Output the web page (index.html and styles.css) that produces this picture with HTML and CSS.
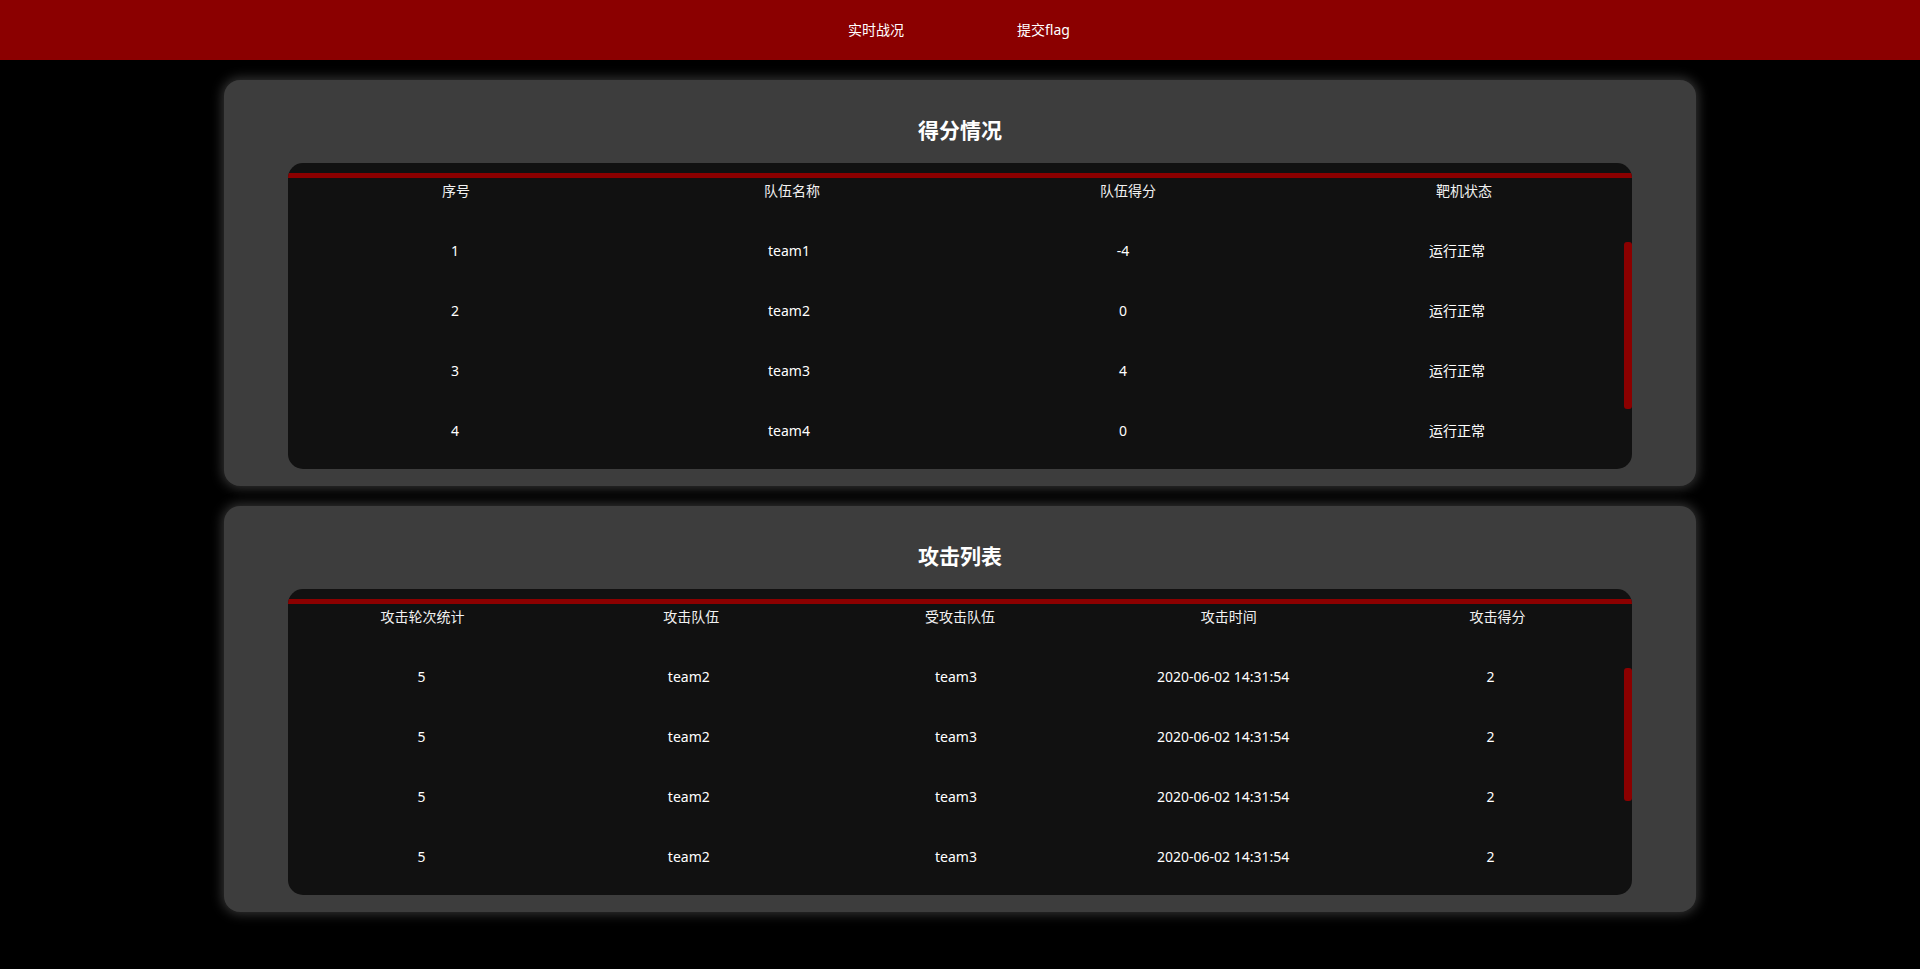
FILE: index.html
```html
<!DOCTYPE html>
<html lang="zh-CN">
<head>
<meta charset="utf-8">
<title>实时战况</title>
<link rel="stylesheet" href="styles.css">
</head>
<body>
<header class="topbar">
  <nav class="nav">
    <a class="nav-link" href="#">实时战况</a>
    <a class="nav-link" href="#">提交flag</a>
  </nav>
</header>
<main class="main">
  <section class="card">
    <h2 class="card-title">得分情况</h2>
    <div class="tbl">
      <div class="thead cols-4">
        <span>序号</span><span>队伍名称</span><span>队伍得分</span><span>靶机状态</span>
      </div>
      <div class="tbody">
        <div class="row cols-4"><span>1</span><span>team1</span><span>-4</span><span>运行正常</span></div>
        <div class="row cols-4"><span>2</span><span>team2</span><span>0</span><span>运行正常</span></div>
        <div class="row cols-4"><span>3</span><span>team3</span><span>4</span><span>运行正常</span></div>
        <div class="row cols-4"><span>4</span><span>team4</span><span>0</span><span>运行正常</span></div>
      </div>
      <div class="thumb thumb-score"></div>
    </div>
  </section>
  <section class="card">
    <h2 class="card-title">攻击列表</h2>
    <div class="tbl">
      <div class="thead cols-5">
        <span>攻击轮次统计</span><span>攻击队伍</span><span>受攻击队伍</span><span>攻击时间</span><span>攻击得分</span>
      </div>
      <div class="tbody">
        <div class="row cols-5"><span>5</span><span>team2</span><span>team3</span><span>2020-06-02 14:31:54</span><span>2</span></div>
        <div class="row cols-5"><span>5</span><span>team2</span><span>team3</span><span>2020-06-02 14:31:54</span><span>2</span></div>
        <div class="row cols-5"><span>5</span><span>team2</span><span>team3</span><span>2020-06-02 14:31:54</span><span>2</span></div>
        <div class="row cols-5"><span>5</span><span>team2</span><span>team3</span><span>2020-06-02 14:31:54</span><span>2</span></div>
      </div>
      <div class="thumb thumb-attack"></div>
    </div>
  </section>
</main>
</body>
</html>
```

FILE: styles.css
```css
* { box-sizing: border-box; }
html, body {
  margin: 0;
  padding: 0;
  background: #000;
}
body {
  font-family: "Noto Sans", "Noto Sans CJK SC", sans-serif;
  color: #fff;
  font-size: 14px;
  min-height: 969px;
}
.topbar {
  height: 60px;
  background: #8b0000;
}
.nav {
  display: flex;
  justify-content: center;
  gap: 113px;
  height: 60px;
  align-items: center;
  padding-right: 2px;
}
.nav-link {
  color: #fff;
  text-decoration: none;
  font-size: 14px;
  line-height: 20px;
}
.main {
  display: flex;
  flex-direction: column;
  align-items: center;
  gap: 20px;
  padding-top: 20px;
}
.card {
  width: 1472px;
  background: #3d3d3d;
  border-radius: 16px;
  padding: 0 64px 17px;
  box-shadow: 0 0 12px 2px rgba(120, 120, 120, 0.45);
}
.card-title {
  margin: 0;
  padding-top: 37px;
  padding-bottom: 22px;
  text-align: center;
  font-family: "Noto Sans CJK SC", sans-serif;
  font-size: 21px;
  line-height: 24px;
  font-weight: 700;
  color: #fff;
}
.tbl {
  position: relative;
  background: #111;
  border-radius: 15px;
  padding-top: 10px;
  padding-bottom: 8px;
  overflow: hidden;
}
.thead {
  border-top: 5px solid #8b0000;
  height: 48px;
  padding-top: 4px;
  line-height: 18px;
  color: #f2f2f2;
}
.cols-4 { display: grid; grid-template-columns: repeat(4, 1fr); }
.cols-5 { display: grid; grid-template-columns: repeat(5, 1fr); }
.thead span, .row span {
  text-align: center;
  white-space: nowrap;
}
.tbody {
  padding-right: 8px;
}
.row {
  height: 60px;
  line-height: 60px;
}
.thumb {
  position: absolute;
  right: 0;
  top: 79px;
  width: 8px;
  background: #8b0000;
  border-radius: 3px;
}
.thumb-score { height: 167px; }
.thumb-attack { height: 133px; }
```
